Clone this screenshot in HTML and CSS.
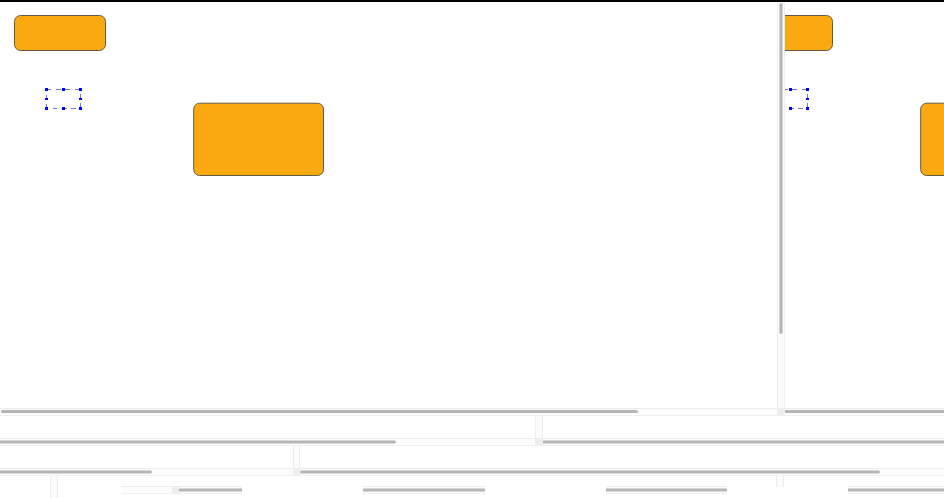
FILE: index.html
```
<!DOCTYPE html>
<html lang="en">
<head>
  <meta charset="UTF-8" />
  <title>Diagram Panes</title>
  <link rel="stylesheet" href="styles.css">
</head>
<body>

  <!-- Shapes shared by both views -->
  <svg class="defs" aria-hidden="true">
    <defs>
      <g id="diagram">
        <rect class="node" x="14.5" y="13.5" width="91" height="35" rx="6" />
        <rect class="node" x="193.7" y="101.2" width="129.8" height="72.3" rx="6" />
        <path class="selection" d="M46 87.5h5M56 87.5h5M65 87.5h5M75 87.5h4" />
        <path class="selection" d="M46 106.5h2M53 106.5h4M62 106.5h5M71 106.5h5" />
        <path class="selection" d="M46.5 93v5M46.5 102v5M80.5 92v6M80.5 101v5" />
        <path class="handle" d="M45 86h3v3h-3zM62 86h3v3h-3zM79 86h3v3h-3zM45 96h3v2h-3zM79 96h3v2h-3zM45 105h3v3h-3zM62 105h3v3h-3zM79 105h3v3h-3z" />
      </g>
    </defs>
  </svg>

  <main class="workspace">

    <!-- Main views -->
    <section class="row views">
      <div class="pane">
        <svg class="canvas"><use href="#diagram" /></svg>
      </div>
      <div class="v-track"><div class="v-thumb"></div></div>
      <div class="pane">
        <svg class="canvas scrolled"><use href="#diagram" /></svg>
      </div>
      <div class="h-track"><div class="h-thumb thumb-main"></div></div>
      <div class="corner"></div>
      <div class="h-track"><div class="h-thumb"></div></div>
    </section>

    <section class="row second">
      <div class="pane"></div>
      <div class="v-track"></div>
      <div class="pane"></div>
      <div class="h-track"><div class="h-thumb thumb-second"></div></div>
      <div class="corner"></div>
      <div class="h-track"><div class="h-thumb"></div></div>
    </section>

    <section class="row third">
      <div class="pane"></div>
      <div class="v-track"></div>
      <div class="pane"></div>
      <div class="h-track"><div class="h-thumb thumb-third-left"></div></div>
      <div class="corner"></div>
      <div class="h-track"><div class="h-thumb thumb-third-right"></div></div>
    </section>

    <!-- Small panes -->
    <section class="strip">
      <div class="cell"><div class="v-track cell-track"></div></div>
      <div class="cell bar">
        <div class="h-track"></div>
        <div class="corner"></div>
        <div class="h-track"><div class="h-thumb"></div></div>
      </div>
      <div class="cell"></div>
      <div class="cell"><div class="h-track"><div class="h-thumb"></div></div></div>
      <div class="cell"></div>
      <div class="cell"><div class="h-track"><div class="h-thumb"></div></div></div>
      <div class="cell"><div class="v-track cell-track short"></div></div>
      <div class="cell"><div class="h-track"><div class="h-thumb"></div></div></div>
    </section>

  </main>

</body>
</html>
```
FILE: styles.css
```
* {
  box-sizing: border-box;
}
body {
  margin: 0;
  background-color: #fff;
  font-family: "Liberation Sans", Arial, sans-serif;
}
.defs {
  display: block;
  width: 0;
  height: 0;
}
.workspace {
  height: 100vh;
  display: grid;
  grid-template-rows: 1fr 30px 30px 22px;
  border-top: 2px solid #000;
  overflow: hidden;
}
.row {
  display: grid;
  grid-template-rows: minmax(0, 1fr) 8px;
  min-height: 0;
}
.views {
  grid-template-columns: 777fr 8px 159fr;
}
.second {
  grid-template-columns: 535fr 8px 401fr;
}
.third {
  grid-template-columns: 293fr 7px 644fr;
}
.pane {
  min-width: 0;
  overflow: hidden;
}

/* Diagram */
.canvas {
  display: block;
  width: 400px;
  height: 240px;
}
.scrolled {
  margin-left: -58px;
}
.node {
  fill: #fba910;
  stroke: #655b45;
}
.selection {
  fill: none;
  stroke: #7777c8;
}
.handle {
  fill: #00f;
}

/* Scrollbars */
.v-track {
  padding: 1px;
  background-color: #fcfcfc;
  border-left: 1px solid #eee;
  border-right: 1px solid #eee;
}
.v-thumb {
  width: 4px;
  height: 82%;
  background-color: #b5b5b5;
  border: solid #d2d2d2;
  border-width: 0 1px;
  border-radius: 2px;
}
.h-track {
  height: 8px;
  padding: 1px 0;
  background-color: #fcfcfc;
  border-top: 1px solid #ececec;
  border-bottom: 1px solid #f0f0f0;
}
.h-thumb {
  height: 4px;
  background-color: #b5b5b5;
  border: solid #d8d8d8;
  border-width: 1px 0;
}
.views .h-thumb {
  height: 3px;
  border: 0;
}
.thumb-main {
  width: 82%;
  margin-left: 1px;
  border-radius: 2px;
}
.thumb-second {
  width: 74%;
  border-radius: 0 2px 2px 0;
}
.thumb-third-left {
  width: 52%;
  border-radius: 0 2px 2px 0;
}
.thumb-third-right {
  width: 90%;
  border-radius: 2px;
}
.corner {
  background-color: #eee;
}

/* Bottom strip */
.strip {
  display: grid;
  grid-template-columns: repeat(7, 121fr) 96fr;
}
.cell {
  padding-top: 10px;
}
.cell:has(.cell-track) {
  padding-top: 0;
}
.bar {
  display: grid;
  grid-template-columns: 51fr 7px 63fr;
  grid-template-rows: 8px;
}
.cell-track {
  width: 8px;
  height: 100%;
  margin-left: 41%;
}
.short {
  height: 11px;
}
```
